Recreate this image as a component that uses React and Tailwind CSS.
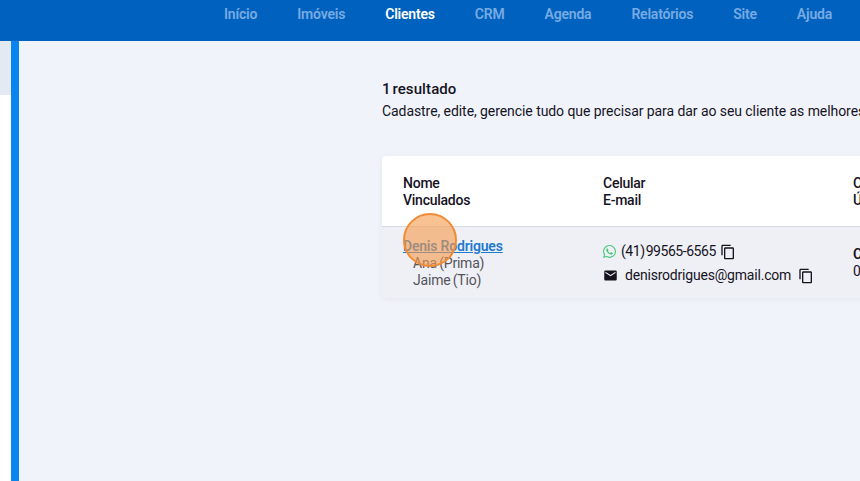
import React from 'react';

const NAV = ['Início', 'Imóveis', 'Clientes', 'CRM', 'Agenda', 'Relatórios', 'Site', 'Ajuda'];

const CopyIcon = () => (
    <svg viewBox="0 0 24 24" className="w-[16px] h-[16px] shrink-0" fill="#16131f">
        <path d="M16 1H4c-1.100 0-2 .9-2 2v14h2V3h12V1zm3 4H8c-1.100 0-2 .9-2 2v14c0 1.100.9 2 2 2h11c1.100 0 2-.9 2-2V7c0-1.100-.9-2-2-2zm0 16H8V7h11v14z" />
    </svg>
);

const WhatsappIcon = () => (
    <svg viewBox="0 0 24 24" className="w-[13px] h-[13px] shrink-0" fill="#3fc775">
        <path d="M17.47 14.38c-.3-.15-1.760-.87-2.030-.97-.27-.1-.47-.15-.67.15-.2.3-.77.97-.94 1.160-.17.2-.35.22-.65.07-.3-.15-1.260-.46-2.390-1.470-.88-.79-1.480-1.760-1.650-2.060-.17-.3-.02-.46.13-.61.13-.13.3-.35.45-.52.15-.17.2-.3.3-.5.1-.2.05-.37-.02-.52-.08-.15-.67-1.620-.92-2.220-.24-.58-.49-.5-.67-.51h-.57c-.2 0-.52.07-.79.37-.27.3-1.040 1.020-1.040 2.480s1.060 2.880 1.210 3.080c.15.2 2.100 3.200 5.080 4.490.71.3 1.260.49 1.690.62.71.23 1.360.2 1.870.12.570-.09 1.760-.72 2.010-1.420.25-.69.25-1.290.17-1.420-.07-.12-.27-.2-.57-.35zM12.050 21.790h-.01a9.870 9.870 0 0 1-5.030-1.380l-.36-.21-3.740.98 1-3.650-.24-.37a9.860 9.860 0 0 1-1.510-5.260c0-5.450 4.440-9.880 9.890-9.880 2.640 0 5.120 1.030 6.990 2.900a9.830 9.830 0 0 1 2.890 6.990c0 5.450-4.440 9.880-9.880 9.880zM20.460 3.490A11.820 11.820 0 0 0 12.050 0C5.500 0 .16 5.340.16 11.890c0 2.100.55 4.140 1.590 5.950L.06 24l6.310-1.650a11.880 11.880 0 0 0 5.680 1.450h.01c6.550 0 11.890-5.340 11.890-11.890a11.820 11.820 0 0 0-3.480-8.410z" />
    </svg>
);

const MailIcon = () => (
    <svg viewBox="0 0 24 24" className="w-[15px] h-[15px] shrink-0" fill="#16131f">
        <path d="M20 4H4c-1.100 0-1.990.9-1.990 2L2 18c0 1.100.9 2 2 2h16c1.100 0 2-.9 2-2V6c0-1.100-.9-2-2-2zm0 4-8 5-8-5V6l8 5 8-5v2z" />
    </svg>
);

export default function App() {
    return (
        <div className="w-[860px] h-[481px] overflow-hidden flex flex-col bg-[#f0f3f9] text-[#16131f] font-['Roboto',sans-serif]">
            <header className="h-[41px] shrink-0 bg-[#0062be] flex justify-end pr-[28px] pt-[6px]">
                <nav className="flex gap-[40px] text-[14px] font-semibold leading-[16px] h-[16px] tracking-[-0.2px]">
                    {NAV.map((item) => (
                        <span key={item} className={item === 'Clientes' ? 'text-white' : 'text-[#78aae3]'}>{item}</span>
                    ))}
                </nav>
            </header>

            <div className="flex-1 flex min-h-0">
                <aside className="w-[11px] shrink-0 bg-white">
                    <div className="h-[54px] bg-[#e4eaf2]" />
                </aside>
                <div className="w-[8px] shrink-0 bg-[#0a84ef]" />

                <main className="flex-1 min-w-0 pl-[363px] pt-[39px] overflow-hidden">
                    <p className="text-[15px] leading-[18px] font-medium tracking-[0.1px] [word-spacing:-2px]">1 resultado</p>
                    <p className="text-[14px] leading-[18px] mt-[4px] whitespace-nowrap tracking-[-0.07px]">Cadastre, edite, gerencie tudo que precisar para dar ao seu cliente as melhores</p>

                    <section className="mt-[36px] w-[600px] rounded-l-[4px] shadow-[0_1px_6px_rgba(30,50,90,0.06)]">
                        <div className="h-[71px] bg-white border-b border-[#d5dbe5] flex pl-[21px] pt-[19px] text-[14px] leading-[17px] font-medium tracking-[-0.25px] rounded-tl-[4px]">
                            <div className="w-[200px]">Nome<br />Vinculados</div>
                            <div className="w-[250px]">Celular<br />E-mail</div>
                            <div>C<br />Ú</div>
                        </div>
                        <div className="h-[71px] bg-[#eff0f5] flex pl-[21px] pt-[11px] rounded-bl-[4px]">
                            <div className="w-[200px] text-[14px] leading-[17px] tracking-[-0.2px]">
                                <a className="block font-semibold text-[#1f79cf] underline">Denis Rodrigues</a>
                                <div className="pl-[10px] text-[#55535c] [word-spacing:-1px]">Ana (Prima)</div>
                                <div className="pl-[10px] text-[#55535c] [word-spacing:-1px]">Jaime (Tio)</div>
                            </div>
                            <div className="w-[250px] text-[14px] leading-[17px]">
                                <div className="flex items-center h-[17px] mt-[5px]">
                                    <WhatsappIcon />
                                    <span className="ml-[5px] tracking-[-0.45px] [word-spacing:-2px]">(41) 99565-6565</span>
                                    <span className="ml-[4px]"><CopyIcon /></span>
                                </div>
                                <div className="flex items-center h-[17px] mt-[7px]">
                                    <MailIcon />
                                    <span className="ml-[7px] tracking-[-0.2px]">denisrodrigues@gmail.com</span>
                                    <span className="ml-[7px]"><CopyIcon /></span>
                                </div>
                            </div>
                            <div className="text-[14px] leading-[17px] mt-[8px]">
                                <div className="font-semibold h-[17px]">C</div>
                                <div>0</div>
                            </div>
                        </div>
                    </section>
                </main>
            </div>

            <div className="absolute left-[403px] top-[213px] w-[54px] h-[54px] rounded-full bg-[#f59a4b]/60 border-2 border-[#f08c35]" />
        </div>
    );
}
